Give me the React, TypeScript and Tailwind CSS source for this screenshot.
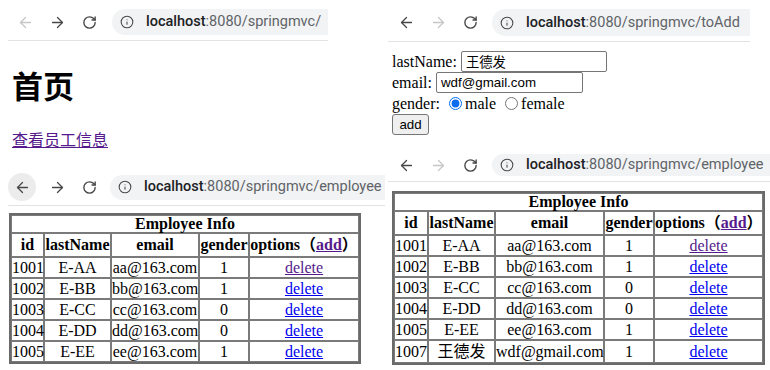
import React from "react";
import { ArrowLeft, ArrowRight, RotateCw, Info } from "lucide-react";

type Emp = [string, string, string, string];

const baseRows: Emp[] = [
  ["1001", "E-AA", "aa@163.com", "1"],
  ["1002", "E-BB", "bb@163.com", "1"],
  ["1003", "E-CC", "cc@163.com", "0"],
  ["1004", "E-DD", "dd@163.com", "0"],
  ["1005", "E-EE", "ee@163.com", "1"],
];

type BarProps = {
  path: string;
  backOn: boolean;
  fwdOn: boolean;
  hoverBack?: boolean;
  wrap: string;
  pill: string;
};

const BrowserBar = ({ path, backOn, fwdOn, hoverBack, wrap, pill }: BarProps) => {
  const on = "text-[#474747]";
  const off = "text-[#c4c7c5]";
  return (
    <div className={`flex items-center border-b border-[#e3e3e3] font-['Roboto','Liberation_Sans',sans-serif] ${wrap}`}>
      <div
        className={`flex items-center justify-center shrink-0 ${
          hoverBack ? "w-7 h-7 rounded-full bg-[#ececec]" : "w-8 h-7"
        } ${backOn ? on : off}`}
      >
        <ArrowLeft size={17} strokeWidth={1.8} />
      </div>
      <div className={`flex items-center justify-center w-8 h-7 shrink-0 ${hoverBack ? "ml-[5px]" : ""} ${fwdOn ? on : off}`}>
        <ArrowRight size={17} strokeWidth={1.8} />
      </div>
      <div className="flex items-center justify-center w-8 h-7 shrink-0 text-[#474747]">
        <RotateCw size={15} strokeWidth={2.2} />
      </div>
      <div className={`flex items-center bg-[#f1f3f4] rounded-l-full whitespace-nowrap overflow-hidden pl-2 text-[14.5px] ${pill}`}>
        <Info size={14} strokeWidth={1.8} className="text-[#474747] shrink-0" />
        <span className="ml-3 text-[#202124] font-medium">localhost</span>
        <span className="text-[#5f6368]">:8080/springmvc/{path}</span>
      </div>
    </div>
  );
};

type TableProps = {
  cols: string[];
  rows: Emp[];
  extra?: Emp;
  wrap: string;
};

const EmpTable = ({ cols, rows, extra, wrap }: TableProps) => {
  const cell = "border border-[#7a7a7a] text-center p-0 whitespace-nowrap";
  return (
    <table
      className={`table-fixed border-separate border-spacing-0 border-2 border-[#6a6a6a] text-[16px] leading-none text-black font-['Liberation_Serif','Noto_Sans_CJK_SC',serif] ${wrap}`}
    >
      <colgroup>
        {cols.map((c, i) => (
          <col key={i} className={c} />
        ))}
      </colgroup>
      <tbody>
        <tr className="h-[18px]">
          <th colSpan={5} className={`${cell} font-bold`}>
            Employee Info
          </th>
        </tr>
        <tr className="h-[24px]">
          <th className={`${cell} font-bold`}>id</th>
          <th className={`${cell} font-bold`}>lastName</th>
          <th className={`${cell} font-bold`}>email</th>
          <th className={`${cell} font-bold`}>gender</th>
          <th className={`${cell} font-bold`}>
            options（<span className="text-[#551a8b] underline">add</span>）
          </th>
        </tr>
        {rows.map((r, i) => (
          <tr key={r[0]} className="h-[21px]">
            <td className={cell}>{r[0]}</td>
            <td className={cell}>{r[1]}</td>
            <td className={cell}>{r[2]}</td>
            <td className={cell}>{r[3]}</td>
            <td className={cell}>
              <span className={`underline ${i === 0 ? "text-[#551a8b]" : "text-[#0000ee]"}`}>delete</span>
            </td>
          </tr>
        ))}
        {extra && (
          <tr className="h-[23px]">
            <td className={cell}>{extra[0]}</td>
            <td className={cell}>{extra[1]}</td>
            <td className={cell}>{extra[2]}</td>
            <td className={cell}>{extra[3]}</td>
            <td className={cell}>
              <span className="underline text-[#0000ee]">delete</span>
            </td>
          </tr>
        )}
      </tbody>
    </table>
  );
};

const AddForm = () => {
  const field =
    "h-[21px] border border-[#767676] rounded-[2px] px-[4px] text-[13.33px] text-black font-['Liberation_Sans','Noto_Sans_CJK_SC',sans-serif] outline-none";
  return (
    <div className="ml-[7px] mt-[9px] text-[16px] leading-none text-black font-['Liberation_Serif','Noto_Sans_CJK_SC',serif]">
      <div className="h-[21px] flex items-center">
        lastName:
        <input readOnly defaultValue="王德发" className={`${field} ml-[4px] w-[146px]`} />
      </div>
      <div className="h-[21px] flex items-center">
        email:
        <input readOnly defaultValue="wdf@gmail.com" className={`${field} ml-[4px] w-[147px]`} />
      </div>
      <div className="h-[21px] flex items-center">
        gender:
        <input type="radio" name="g" defaultChecked className="ml-[9px] mr-[3px] w-[13px] h-[13px] accent-[#0b6cf2]" />
        male
        <input type="radio" name="g" className="ml-[9px] mr-[3px] w-[13px] h-[13px]" />
        female
      </div>
      <div className="h-[21px] flex items-center">
        <button className="h-[21px] w-[37px] border border-[#767676] bg-[#efefef] rounded-[3px] text-[13.33px] font-['Liberation_Sans',sans-serif]">
          add
        </button>
      </div>
    </div>
  );
};

export default function App() {
  return (
    <div className="w-[770px] h-[370px] bg-white flex overflow-hidden">
      <div className="w-[385px] shrink-0 flex flex-col">
        <BrowserBar
          path=""
          backOn={false}
          fwdOn={true}
          wrap="ml-2 w-[320px] h-[41px] pt-[4px] pl-px"
          pill="ml-[7px] h-[26px] flex-1"
        />
        <h1 className="mt-[28px] ml-3 text-[31px] leading-none font-bold text-black font-['Noto_Sans_CJK_SC',serif]">
          首页
        </h1>
        <div className="mt-[33px] ml-3 text-[16px] leading-none font-['Liberation_Serif','Noto_Sans_CJK_SC',serif]">
          <span className="text-[#551a8b] underline">查看员工信息</span>
        </div>
        <BrowserBar
          path="employee"
          backOn={true}
          fwdOn={true}
          hoverBack
          wrap="mt-[15px] ml-2 w-[377px] h-[42px] pt-[5px]"
          pill="ml-[5px] h-[25px] flex-1"
        />
        <EmpTable
          cols={["w-[33px]", "w-[67px]", "w-[88px]", "w-[50px]", "w-[110px]"]}
          rows={baseRows}
          wrap="mt-[7px] ml-[9px] w-[352px]"
        />
      </div>
      <div className="w-[385px] shrink-0 flex flex-col">
        <BrowserBar
          path="toAdd"
          backOn={true}
          fwdOn={false}
          wrap="ml-[3px] w-[362px] h-[42px] pt-[4px] pl-[2px]"
          pill="ml-[6px] h-[27px] flex-1"
        />
        <AddForm />
        <BrowserBar
          path="employee"
          backOn={true}
          fwdOn={false}
          wrap="mt-[5px] ml-[3px] w-[382px] h-[42px] pt-[9px] pl-[2px]"
          pill="ml-[6px] h-[22px] flex-1"
        />
        <EmpTable
          cols={["w-[34px]", "w-[67px]", "w-[109px]", "w-[50px]", "w-[109px]"]}
          rows={baseRows}
          extra={["1007", "王德发", "wdf@gmail.com", "1"]}
          wrap="mt-[9px] ml-[7px] w-[373px]"
        />
      </div>
    </div>
  );
}
